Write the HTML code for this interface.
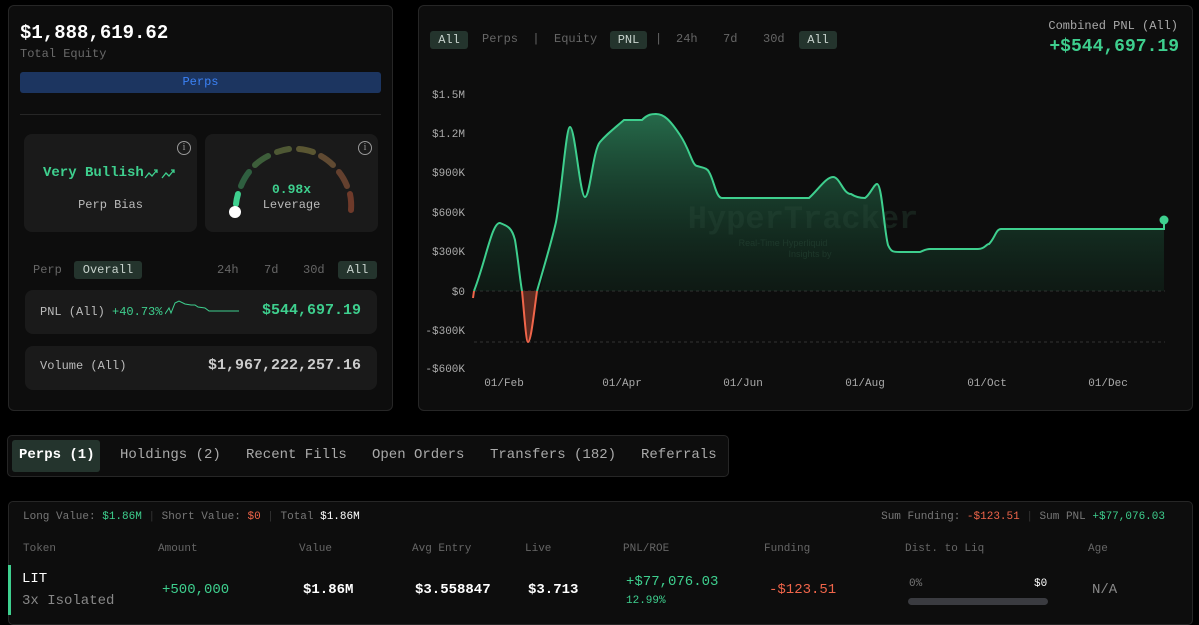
<!DOCTYPE html>
<html><head><meta charset="utf-8"><style>
*{box-sizing:border-box;margin:0;padding:0}
body{width:1199px;height:625px;background:#000;font-family:"Liberation Mono",monospace;color:#ddd;position:relative;overflow:hidden}
.abs{position:absolute}
.panel{position:absolute;background:#0d0d0d;border:1px solid #262626;border-radius:6px}
.card{position:absolute;background:#1a1a1a;border-radius:8px}
.g{color:#3ecf8e}.r{color:#f0654a}.mu{color:#8a8a8a}
.pill{position:absolute;background:#24342d;border-radius:3px;color:#c8d3cd;font-size:12px;text-align:center}
.info{position:absolute;width:14px;height:14px;border:1.3px solid #999;border-radius:50%;font-size:10px;line-height:12px;text-align:center;color:#999;font-family:"Liberation Serif",serif}
</style></head><body>

<!-- left panel -->
<div class="panel" style="left:8px;top:5px;width:385px;height:406px">
  <div class="abs" style="left:11px;top:16px;font-size:19px;font-weight:bold;color:#fff">$1,888,619.62</div>
  <div class="abs mu" style="left:11px;top:41px;font-size:12px;color:#6a6a6a">Total Equity</div>
  <div class="abs" style="left:11px;top:66px;width:361px;height:21px;background:#1c3560;border-radius:3px;color:#3b82f6;font-size:12px;text-align:center;line-height:21px">Perps</div>
  <div class="abs" style="left:11px;top:108px;width:361px;height:1px;background:#262626"></div>
  <div class="card" style="left:15px;top:128px;width:173px;height:98px">
    <div class="info" style="left:153px;top:7px">i</div>
    <div class="abs g" style="left:19px;top:31px;font-size:14px;font-weight:bold">Very Bullish</div>
    <svg class="abs" style="left:120px;top:33px" width="34" height="14" fill="none" stroke="#3ecf8e" stroke-width="1.3">
      <path d="M1 11 L5 6 L8 9 L13 3 M10 3 L13 3 L13 6"/>
      <path d="M18 11 L22 6 L25 9 L30 3 M27 3 L30 3 L30 6"/>
    </svg>
    <div class="abs" style="left:0;width:173px;text-align:center;top:64px;font-size:12px;color:#bbb">Perp Bias</div>
  </div>
  <div class="card" style="left:196px;top:128px;width:173px;height:98px">
    <div class="info" style="left:153px;top:7px">i</div>
    <svg class="abs" style="left:0;top:0" width="173" height="98">
      <g fill="none" stroke-width="6" stroke-linecap="round">
        <path d="M31 70 A56 56 0 0 1 33 60" stroke="#3ecf8e"/>
        <path d="M36 52 A56 56 0 0 1 44 38" stroke="#2f5f40"/>
        <path d="M50 31 A56 56 0 0 1 63 22" stroke="#3d5e3a"/>
        <path d="M72 18 A56 56 0 0 1 84 15" stroke="#4e5834"/>
        <path d="M94 15 A56 56 0 0 1 108 18" stroke="#5a5632"/>
        <path d="M116 22 A56 56 0 0 1 128 31" stroke="#604a32"/>
        <path d="M134 38 A56 56 0 0 1 142 52" stroke="#64402e"/>
        <path d="M145 60 A56 56 0 0 1 146 76" stroke="#6e3a2a"/>
      </g>
      <circle cx="30" cy="78" r="6" fill="#fff"/>
    </svg>
    <div class="abs g" style="left:0;width:173px;text-align:center;top:48px;font-size:13px;font-weight:bold">0.98x</div>
    <div class="abs" style="left:0;width:173px;text-align:center;top:64px;font-size:12px;color:#bbb">Leverage</div>
  </div>
  <div class="abs" style="left:24px;top:257px;font-size:12px;color:#666">Perp</div>
  <div class="pill" style="left:65px;top:255px;width:68px;height:18px;line-height:18px">Overall</div>
  <div class="abs" style="left:208px;top:257px;font-size:12px;color:#666">24h</div>
  <div class="abs" style="left:255px;top:257px;font-size:12px;color:#666">7d</div>
  <div class="abs" style="left:294px;top:257px;font-size:12px;color:#666">30d</div>
  <div class="pill" style="left:329px;top:255px;width:39px;height:18px;line-height:18px">All</div>
  <div class="card" style="left:16px;top:284px;width:352px;height:44px">
    <div class="abs" style="left:15px;top:15px;font-size:12px;color:#bbb">PNL (All) <span class="g">+40.73%</span></div>
    <svg class="abs" style="left:140px;top:10px" width="76" height="20"><path d="M0 14 L4 8 L6 13 L10 3 L14 1 L20 4 L26 5 L30 5 L33 7 L40 8 L44 11 L60 11 L74 11" fill="none" stroke="#3ecf8e" stroke-width="1"/></svg>
    <div class="abs g" style="right:16px;top:12px;font-size:15px;font-weight:bold">$544,697.19</div>
  </div>
  <div class="card" style="left:16px;top:340px;width:352px;height:44px">
    <div class="abs" style="left:15px;top:13px;font-size:12px;color:#bbb">Volume (All)</div>
    <div class="abs" style="right:16px;top:11px;font-size:15px;font-weight:bold;color:#ccc">$1,967,222,257.16</div>
  </div>
</div>

<!-- right panel -->
<div class="panel" style="left:418px;top:5px;width:775px;height:406px"></div>
<div class="pill" style="left:430px;top:31px;width:38px;height:18px;line-height:18px">All</div>
<div class="abs" style="left:482px;top:32px;font-size:12px;color:#666">Perps &nbsp;|&nbsp; Equity</div>
<div class="pill" style="left:610px;top:31px;width:37px;height:18px;line-height:18px">PNL</div>
<div class="abs" style="left:655px;top:32px;font-size:12px;color:#666">|</div>
<div class="abs" style="left:676px;top:32px;font-size:12px;color:#666">24h</div>
<div class="abs" style="left:723px;top:32px;font-size:12px;color:#666">7d</div>
<div class="abs" style="left:763px;top:32px;font-size:12px;color:#666">30d</div>
<div class="pill" style="left:799px;top:31px;width:38px;height:18px;line-height:18px">All</div>
<div class="abs" style="right:21px;top:19px;font-size:12px;color:#aaa">Combined PNL (All)</div>
<div class="abs g" style="right:20px;top:37px;font-size:18px;font-weight:bold">+$544,697.19</div>

<svg class="abs" style="left:0;top:0" width="1199" height="420">
  <defs><linearGradient id="fg" x1="0" y1="114" x2="0" y2="291" gradientUnits="userSpaceOnUse">
    <stop offset="0" stop-color="#2a7a55" stop-opacity="0.85"/><stop offset="1" stop-color="#123624" stop-opacity="0.3"/></linearGradient></defs>
  <g font-size="11" fill="#aaa" font-family="Liberation Mono,monospace" text-anchor="end">
    <text x="465" y="98">$1.5M</text><text x="465" y="137">$1.2M</text><text x="465" y="176">$900K</text>
    <text x="465" y="216">$600K</text><text x="465" y="255">$300K</text><text x="465" y="295">$0</text>
    <text x="465" y="334">-$300K</text><text x="465" y="372">-$600K</text>
  </g>
  <g font-size="11" fill="#aaa" font-family="Liberation Mono,monospace" text-anchor="middle">
    <text x="504" y="386">01/Feb</text><text x="622" y="386">01/Apr</text><text x="743" y="386">01/Jun</text>
    <text x="865" y="386">01/Aug</text><text x="987" y="386">01/Oct</text><text x="1108" y="386">01/Dec</text>
  </g>
  <line x1="474" y1="291" x2="1165" y2="291" stroke="#333" stroke-dasharray="3 3"/>
  <line x1="474" y1="342" x2="1165" y2="342" stroke="#333" stroke-dasharray="3 3"/>
  <path d="M474 291 C486 260 492 222 500 223 C508 226 512 228 515 240 C520 270 524 342 528 342 C533 342 535 300 540 292 C546 260 552 240 556 222 C562 190 566 127 570 127 C575 127 580 197 585 197 C590 197 593 150 600 142 C606 135 610 132 624 120 L642 120 C648 114 652 114 656 114 C664 114 670 120 680 135 C690 150 692 165 697 166 C704 168 707 168 709 172 C714 180 716 198 722 198 L809 198 C818 190 826 177 833 177 C840 177 843 194 851 194 C857 198 862 198 865 198 C870 195 874 184 877 184 C882 184 884 230 888 245 C891 252 893 252 900 252 L920 252 C925 250 926 249 930 249 L978 249 C985 249 986 244 989 244 C995 238 996 229 1001 229 L1164 229 L1164 291 Z" fill="url(#fg)"/>
  <text x="803" y="228" text-anchor="middle" font-size="32" font-weight="bold" fill="#2a4a3a" font-family="Liberation Mono,monospace" opacity="0.35">HyperTracker</text>
  <text x="783" y="246" text-anchor="middle" font-size="9" fill="#2a4a3a" font-family="Liberation Sans,sans-serif" opacity="0.5">Real-Time Hyperliquid</text>
  <text x="810" y="257" text-anchor="middle" font-size="9" fill="#2a4a3a" font-family="Liberation Sans,sans-serif" opacity="0.5">Insights by</text>
  <path d="M474 291 C486 260 492 222 500 223 C508 226 512 228 515 240 C518 258 520 280 522 291" fill="none" stroke="#3ecf8e" stroke-width="2"/>
  <path d="M522 291 C524 310 526 342 528 342 C531 342 534 312 537 291" fill="#5a2a20" stroke="#f0654a" stroke-width="2"/>
  <path d="M473 298 L474 291" stroke="#f0654a" stroke-width="2"/>
  <path d="M537 291 C546 260 552 240 556 222 C562 190 566 127 570 127 C575 127 580 197 585 197 C590 197 593 150 600 142 C606 135 610 132 624 120 L642 120 C648 114 652 114 656 114 C664 114 670 120 680 135 C690 150 692 165 697 166 C704 168 707 168 709 172 C714 180 716 198 722 198 L809 198 C818 190 826 177 833 177 C840 177 843 194 851 194 C857 198 862 198 865 198 C870 195 874 184 877 184 C882 184 884 230 888 245 C891 252 893 252 900 252 L920 252 C925 250 926 249 930 249 L978 249 C985 249 986 244 989 244 C995 238 996 229 1001 229 L1164 229 L1164 220" fill="none" stroke="#3ecf8e" stroke-width="2"/>
  <circle cx="1164" cy="220" r="4.5" fill="#3ecf8e"/>
</svg>

<!-- tabs -->
<div class="panel" style="left:7px;top:435px;width:722px;height:42px;border-radius:5px;background:#0d0d0d"></div>
<div class="abs" style="left:12px;top:440px;width:88px;height:32px;background:#24342d;border-radius:3px"></div>
<div class="abs" style="left:19px;top:447px;font-size:14px;font-weight:bold;color:#fff">Perps (1)</div>
<div class="abs" style="left:120px;top:447px;font-size:14px;color:#aaa">Holdings (2)</div>
<div class="abs" style="left:246px;top:447px;font-size:14px;color:#aaa">Recent Fills</div>
<div class="abs" style="left:372px;top:447px;font-size:14px;color:#aaa">Open Orders</div>
<div class="abs" style="left:490px;top:447px;font-size:14px;color:#aaa">Transfers (182)</div>
<div class="abs" style="left:641px;top:447px;font-size:14px;color:#aaa">Referrals</div>

<!-- table -->
<div class="panel" style="left:8px;top:501px;width:1185px;height:124px;border-radius:5px"></div>
<div class="abs" style="left:23px;top:511px;font-size:11px;color:#777">Long Value: <span class="g">$1.86M</span> <span style="color:#333">|</span> Short Value: <span class="r">$0</span> <span style="color:#333">|</span> Total <span style="color:#fff">$1.86M</span></div>
<div class="abs" style="right:34px;top:511px;font-size:11px;color:#777">Sum Funding: <span class="r">-$123.51</span> <span style="color:#333">|</span> Sum PNL <span class="g">+$77,076.03</span></div>
<div class="abs" style="left:23px;top:543px;font-size:11px;color:#666">Token</div>
<div class="abs" style="left:158px;top:543px;font-size:11px;color:#666">Amount</div>
<div class="abs" style="left:299px;top:543px;font-size:11px;color:#666">Value</div>
<div class="abs" style="left:412px;top:543px;font-size:11px;color:#666">Avg Entry</div>
<div class="abs" style="left:525px;top:543px;font-size:11px;color:#666">Live</div>
<div class="abs" style="left:623px;top:543px;font-size:11px;color:#666">PNL/ROE</div>
<div class="abs" style="left:764px;top:543px;font-size:11px;color:#666">Funding</div>
<div class="abs" style="left:905px;top:543px;font-size:11px;color:#666">Dist. to Liq</div>
<div class="abs" style="left:1088px;top:543px;font-size:11px;color:#666">Age</div>
<div class="abs" style="left:8px;top:565px;width:3px;height:50px;background:#3ecf8e"></div>
<div class="abs" style="left:22px;top:571px;font-size:14px;color:#fff">LIT</div>
<div class="abs" style="left:22px;top:593px;font-size:14px;color:#888">3x Isolated</div>
<div class="abs g" style="left:162px;top:582px;font-size:14px">+500,000</div>
<div class="abs" style="left:303px;top:582px;font-size:14px;color:#fff;font-weight:bold">$1.86M</div>
<div class="abs" style="left:415px;top:582px;font-size:14px;color:#fff;font-weight:bold">$3.558847</div>
<div class="abs" style="left:528px;top:582px;font-size:14px;color:#fff;font-weight:bold">$3.713</div>
<div class="abs g" style="left:626px;top:574px;font-size:14px">+$77,076.03</div>
<div class="abs g" style="left:626px;top:595px;font-size:11px">12.99%</div>
<div class="abs r" style="left:769px;top:582px;font-size:14px">-$123.51</div>
<div class="abs" style="left:909px;top:578px;font-size:11px;color:#777">0%</div>
<div class="abs" style="left:1034px;top:578px;font-size:11px;color:#fff">$0</div>
<div class="abs" style="left:908px;top:598px;width:140px;height:7px;background:#3a3b40;border-radius:4px"></div>
<div class="abs" style="left:1092px;top:582px;font-size:14px;color:#888">N/A</div>
</body></html>
